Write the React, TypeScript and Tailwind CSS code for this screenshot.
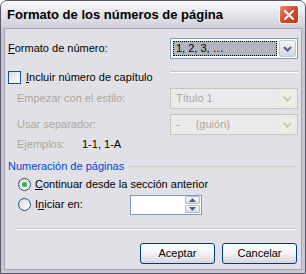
import React from "react";

const font = { fontFamily: '"Liberation Sans", Arial, sans-serif' };

function Arrow({ disabled }: { disabled?: boolean }) {
  return (
    <svg width="9" height="6" viewBox="0 0 9 6">
      <path
        d="M1 1 L4.5 4.5 L8 1"
        fill="none"
        stroke={disabled ? "#c9c7ba" : "#4d6185"}
        strokeWidth="2"
      />
    </svg>
  );
}

function Combo({ text, disabled, selected }: { text: React.ReactNode; disabled?: boolean; selected?: boolean }) {
  return (
    <div
      className={`w-[128px] h-[21px] flex items-center border ${
        disabled ? "border-[#c9c7ba] bg-[#ebeaed]" : "border-[#7f9db9] bg-white"
      }`}
    >
      <div className="flex-1 h-full p-[2px] flex items-center">
        {selected ? (
          <div className="w-full h-full bg-[#b2b4bf] border border-dotted border-black flex items-center px-[2px] text-black">
            {text}
          </div>
        ) : (
          <div className={`px-[3px] ${disabled ? "text-[#aca899]" : "text-black"}`}>{text}</div>
        )}
      </div>
      <div
        className={`w-[17px] h-[17px] mr-[1px] flex items-center justify-center rounded-[2px] border ${
          disabled ? "border-[#e8e8e0] bg-[#eeeee6]" : "border-[#c3c8d8] bg-gradient-to-b from-[#f5f5f8] to-[#d3d6e0]"
        }`}
      >
        <Arrow disabled={disabled} />
      </div>
    </div>
  );
}

function Radio({ checked }: { checked?: boolean }) {
  return (
    <div className="w-[13px] h-[13px] rounded-full border border-[#1c5180] bg-gradient-to-br from-[#dcdcd8] to-white flex items-center justify-center">
      {checked && <div className="w-[5px] h-[5px] rounded-full bg-[#3bb03b]" />}
    </div>
  );
}

function Button({ label }: { label: React.ReactNode }) {
  return (
    <div className="w-[75px] h-[21px] rounded-[3px] border border-[#003c74] bg-gradient-to-b from-white via-[#f3f3f3] to-[#d6d5de] flex items-center justify-center text-black">
      {label}
    </div>
  );
}

function Spin({ up }: { up?: boolean }) {
  return (
    <div className="w-[15px] h-[8px] rounded-[1px] border border-[#b6bccb] bg-gradient-to-b from-[#fafafc] to-[#d8dbe4] flex items-center justify-center">
      <svg width="7" height="4" viewBox="0 0 7 4">
        <path d={up ? "M0 4 L3.5 0 L7 4 Z" : "M0 0 L3.5 4 L7 0 Z"} fill="#4d6185" />
      </svg>
    </div>
  );
}

export default function App() {
  return (
    <div className="w-[306px] h-[274px] text-[11px]" style={font}>
      <div className="w-full h-full flex flex-col rounded-t-[7px] border border-[#585869] bg-[#c8c8d2] overflow-hidden">
        {/* title bar */}
        <div className="h-[27px] shrink-0 flex items-center justify-between pl-[6px] pr-[6px] bg-gradient-to-b from-[#fdfdfe] via-[#e4e4ea] to-[#cfcfd8]">
          <div className="text-[13px] font-bold text-black">
            Formato de los números de página
          </div>
          <div className="w-[20px] h-[19px] rounded-[3px] border border-white bg-gradient-to-br from-[#e98a6c] via-[#d4492c] to-[#c0391c] flex items-center justify-center">
            <svg width="10" height="10" viewBox="0 0 10 10">
              <path d="M1 1 L9 9 M9 1 L1 9" stroke="white" strokeWidth="2" strokeLinecap="square" />
            </svg>
          </div>
        </div>
        {/* client */}
        <div className="flex-1 mx-[3px] mb-[3px] border border-[#a5a5b4] bg-[#e1e0e6] flex flex-col px-[3px] pt-[9px]">
          <div className="flex items-center justify-between h-[21px]">
            <span className="text-black">
              <u>F</u>ormato de número:
            </span>
            <Combo text="1, 2, 3, …" selected />
          </div>
          <div className="flex items-center h-[19px] mt-[9px]">
            <div className="w-[13px] h-[13px] border border-[#1c5180] bg-gradient-to-br from-[#dcdcd8] to-white" />
            <span className="ml-[5px] text-black">
              <u>I</u>ncluir número de capítulo
            </span>
            <div className="w-[128px] ml-auto h-[2px] border-t border-[#c7c6cf] border-b border-b-white self-start mt-[3px]" />
          </div>
          <div className="flex items-center justify-between h-[21px] mt-[1px]">
            <span className="ml-[9px] text-[#aca899]">Empezar con el estilo:</span>
            <Combo text="Título 1" disabled />
          </div>
          <div className="flex items-center justify-between h-[21px] mt-[5px]">
            <span className="ml-[9px] text-[#aca899]">Usar separador:</span>
            <Combo
              text={
                <span>
                  -<span className="ml-[16px]">(guión)</span>
                </span>
              }
              disabled
            />
          </div>
          <div className="flex items-center h-[19px]">
            <span className="ml-[9px] w-[65px] text-[#aca899]">Ejemplos:</span>
            <span className="text-black">1-1, 1-A</span>
          </div>
          <div className="flex items-center h-[17px] mt-[4px]">
            <span className="text-[#0046d5]">Numeración de páginas</span>
            <div className="flex-1 ml-[4px] mr-[1px] border-t border-[#d0d0bf]" />
          </div>
          <div className="flex items-center h-[17px] mt-[1px]">
            <div className="ml-[10px]">
              <Radio checked />
            </div>
            <span className="ml-[4px] text-black">
              <u>C</u>ontinuar desde la sección anterior
            </span>
          </div>
          <div className="flex items-center h-[21px] mt-[1px]">
            <div className="ml-[10px]">
              <Radio />
            </div>
            <span className="ml-[4px] w-[95px] text-black">
              I<u>n</u>iciar en:
            </span>
            <div className="w-[72px] h-[20px] border border-[#7f9db9] bg-white flex justify-end items-center pr-[1px]">
              <div className="flex flex-col gap-[1px]">
                <Spin up />
                <Spin />
              </div>
            </div>
          </div>
          <div className="mt-[13px] ml-[8px] mr-[2px] border-t border-[#c7c6cf] border-b border-b-white" />
          <div className="flex justify-end gap-[7px] mt-[13px] mr-[1px]">
            <Button label="Aceptar" />
            <Button label="Cancelar" />
          </div>
        </div>
      </div>
    </div>
  );
}
